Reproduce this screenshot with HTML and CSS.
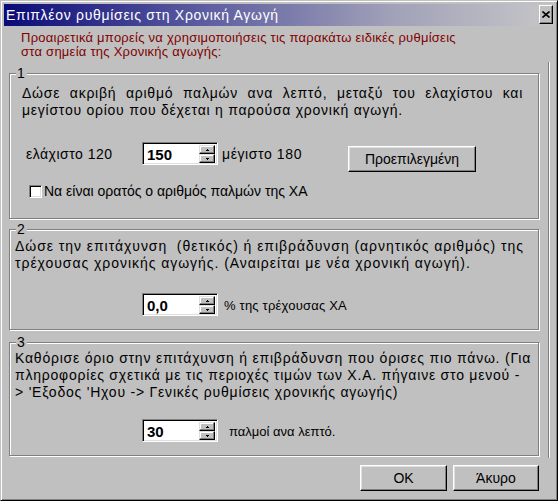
FILE: index.html
```html
<!DOCTYPE html>
<html lang="el">
<head>
<meta charset="utf-8">
<title>Επιπλέον ρυθμίσεις στη Χρονική Αγωγή</title>
<link rel="stylesheet" href="styles.css">
</head>
<body>
<div class="window">
  <div class="titlebar">
    <span class="title">Επιπλέον ρυθμίσεις στη Χρονική Αγωγή</span>
    <span class="close"><svg width="8" height="7" viewBox="0 0 8 7"><path d="M0.5 0.5 L7.5 6.5 M7.5 0.5 L0.5 6.5" stroke="#000" stroke-width="1.6" fill="none"/></svg></span>
  </div>
  <p class="intro">Προαιρετικά μπορείς να χρησιμοποιήσεις τις παρακάτω ειδικές ρυθμίσεις<br>στα σημεία της Χρονικής αγωγής:</p>
  <div class="panel">
    <div class="group g1">
      <span class="cap">1</span>
      <p class="desc d1"><span class="wide">Δώσε ακριβή αριθμό παλμών ανα λεπτό, μεταξύ του ελαχίστου και</span><br>μεγίστου ορίου που δέχεται η παρούσα χρονική αγωγή.</p>
      <div class="row r1">
        <span class="lbl lmin">ελάχιστο 120</span>
        <div class="spin"><span class="val">150</span><span class="btns"><span class="sb"><svg width="3" height="2" viewBox="0 0 3 2"><rect x="1" y="0" width="1" height="1"/><rect x="0" y="1" width="3" height="1"/></svg></span><span class="sb"><svg width="3" height="2" viewBox="0 0 3 2"><rect x="0" y="0" width="3" height="1"/><rect x="1" y="1" width="1" height="1"/></svg></span></span></div>
        <span class="lbl lmax">μέγιστο 180</span>
        <span class="btn bdef">Προεπιλεγμένη</span>
      </div>
      <div class="check"><span class="box"></span><span>Να είναι ορατός ο αριθμός παλμών της ΧΑ</span></div>
    </div>
    <div class="group g2">
      <span class="cap">2</span>
      <p class="desc d2">Δώσε την επιτάχυνση &nbsp;(θετικός) ή επιβράδυνση (αρνητικός αριθμός) της<br>τρέχουσας χρονικής αγωγής. (Αναιρείται με νέα χρονική αγωγή).</p>
      <div class="row r2">
        <div class="spin"><span class="val">0,0</span><span class="btns"><span class="sb"><svg width="3" height="2" viewBox="0 0 3 2"><rect x="1" y="0" width="1" height="1"/><rect x="0" y="1" width="3" height="1"/></svg></span><span class="sb"><svg width="3" height="2" viewBox="0 0 3 2"><rect x="0" y="0" width="3" height="1"/><rect x="1" y="1" width="1" height="1"/></svg></span></span></div>
        <span class="lbl lpct">% της τρέχουσας ΧΑ</span>
      </div>
    </div>
    <div class="group g3">
      <span class="cap">3</span>
      <p class="desc d3">Καθόρισε όριο στην επιτάχυνση ή επιβράδυνση που όρισες πιο πάνω. (Για<br>πληροφορίες σχετικά με τις περιοχές τιμών των Χ.Α. πήγαινε στο μενού -<br>&gt; 'Εξοδος 'Ηχου -&gt; Γενικές ρυθμίσεις χρονικής αγωγής)</p>
      <div class="row r3">
        <div class="spin"><span class="val">30</span><span class="btns"><span class="sb"><svg width="3" height="2" viewBox="0 0 3 2"><rect x="1" y="0" width="1" height="1"/><rect x="0" y="1" width="3" height="1"/></svg></span><span class="sb"><svg width="3" height="2" viewBox="0 0 3 2"><rect x="0" y="0" width="3" height="1"/><rect x="1" y="1" width="1" height="1"/></svg></span></span></div>
        <span class="lbl lbpm">παλμοί ανα λεπτό.</span>
      </div>
    </div>
  </div>
  <div class="footer">
    <span class="btn bok">OK</span>
    <span class="btn bcancel">Άκυρο</span>
  </div>
</div>
</body>
</html>
```

FILE: styles.css
```css
* { box-sizing: border-box; }
html, body { margin: 0; padding: 0; background: #c0c0c0; }
body { width: 558px; height: 501px; overflow: hidden; font-family: "Liberation Sans", Arial, sans-serif; }

.window {
  width: 558px;
  height: 501px;
  border: 1px solid;
  border-color: #c0c0c0 #000 #000 #c0c0c0;
  box-shadow: inset 1px 1px 0 #fff, inset -1px -1px 0 #808080;
  padding: 3px;
  background: #c0c0c0;
}

.titlebar {
  height: 22px;
  background: linear-gradient(to right, #0a0a78 0%, #5a5aa0 35%, #a0a0b8 70%, #c6c6c8 100%);
  display: flex;
  align-items: center;
  justify-content: space-between;
  padding: 0 1px 0 2px;
}
.title {
  color: #fff;
  font-size: 14px;
  letter-spacing: 0.7px;
  white-space: nowrap;
}
.close {
  width: 14px;
  height: 19px;
  margin-top: 1px;
  align-self: flex-start;
  background: #c0c0c0;
  border: 1px solid;
  border-color: #fff #000 #000 #fff;
  box-shadow: inset -1px -1px 0 #808080;
  display: flex;
  align-items: center;
  justify-content: center;
}

.intro {
  margin: 0;
  padding: 5px 0 0 17px;
  color: #800000;
  font-size: 13px;
  line-height: 14px;
  letter-spacing: 0.25px;
  height: 36px;
}

.panel {
  width: 545px;
  padding: 11px 8px 2px 5px;
  border-right: 1px solid #808080;
  box-shadow: 1px 0 0 #fff;
}

.group {
  position: relative;
  width: 530px;
  border: 1px solid #808080;
  box-shadow: inset 1px 1px 0 #fff, 1px 1px 0 #fff;
}
.g1 { height: 146px; padding: 11px 0 0 12px; }
.g2 { height: 101px; margin-top: 10px; padding: 8px 0 0 5px; }
.g3 { height: 114px; margin-top: 12px; padding: 7px 0 0 5px; }

.cap {
  position: absolute;
  top: -9px;
  left: 6px;
  padding: 0 2px 0 1px;
  background: #c0c0c0;
  font-size: 14px;
  line-height: 16px;
}

.desc {
  margin: 0;
  font-size: 14px;
  line-height: 17px;
  letter-spacing: 0.75px;
  white-space: nowrap;
}
.d2 { letter-spacing: 0.95px; }
.d3 { letter-spacing: 0.78px; }
.wide { word-spacing: 5px; }

.row {
  display: flex;
  align-items: center;
  height: 23px;
  font-size: 14px;
}
.r1 { margin-top: 23px; margin-left: 4px; }
.r2 { margin-top: 21px; margin-left: 127px; }
.r3 { margin-top: 18px; margin-left: 127px; }

.lbl { white-space: nowrap; padding-top: 1px; }
.lmin { width: 116px; letter-spacing: 0.5px; }
.lmax { width: 126px; margin-left: 4px; letter-spacing: 0.6px; }
.lpct { margin-left: 6px; font-size: 13px; letter-spacing: 0.2px; }
.lbpm { margin-left: 11px; font-size: 13px; }

.spin {
  width: 76px;
  height: 23px;
  border: 1px solid;
  border-color: #808080 #fff #fff #808080;
  box-shadow: inset 1px 1px 0 #000, inset -1px -1px 0 #dfdfdf;
  padding: 2px 1px 1px 2px;
  display: flex;
  background: #fff;
}
.val {
  flex: 1;
  background: #fff;
  font-size: 15px;
  font-weight: bold;
  line-height: 19px;
  padding-left: 2px;
}
.btns {
  width: 16px;
  display: flex;
  flex-direction: column;
  margin-right: 1px;
}
.sb {
  flex: 1;
  background: #c0c0c0;
  border: 1px solid;
  border-color: #dfdfdf #000 #000 #dfdfdf;
  box-shadow: inset -1px -1px 0 #808080, inset 1px 1px 0 #fff;
  display: flex;
  align-items: center;
  justify-content: center;
}
.sb svg { display: block; fill: #000; }

.btn {
  display: flex;
  align-items: center;
  justify-content: center;
  background: #c0c0c0;
  border: 1px solid;
  border-color: #fff #000 #000 #fff;
  box-shadow: inset -1px -1px 0 #808080, inset 1px 1px 0 #dfdfdf;
  font-size: 14px;
  color: #000;
}
.bdef {
  width: 128px;
  height: 26px;
  align-self: flex-start;
  margin-top: 4px;
}

.check {
  display: flex;
  align-items: center;
  margin-top: 18px;
  margin-left: 7px;
  font-size: 14px;
  line-height: 17px;
}
.box {
  width: 13px;
  height: 13px;
  margin-right: 2px;
  background: #fff;
  border: 1px solid;
  border-color: #808080 #fff #fff #808080;
  box-shadow: inset 1px 1px 0 #000, inset -1px -1px 0 #dfdfdf;
}

.footer {
  display: flex;
  justify-content: flex-end;
  gap: 6px;
  margin-top: 7px;
  padding-right: 15px;
}
.bok { width: 87px; height: 26px; }
.bcancel { width: 86px; height: 26px; }
```
